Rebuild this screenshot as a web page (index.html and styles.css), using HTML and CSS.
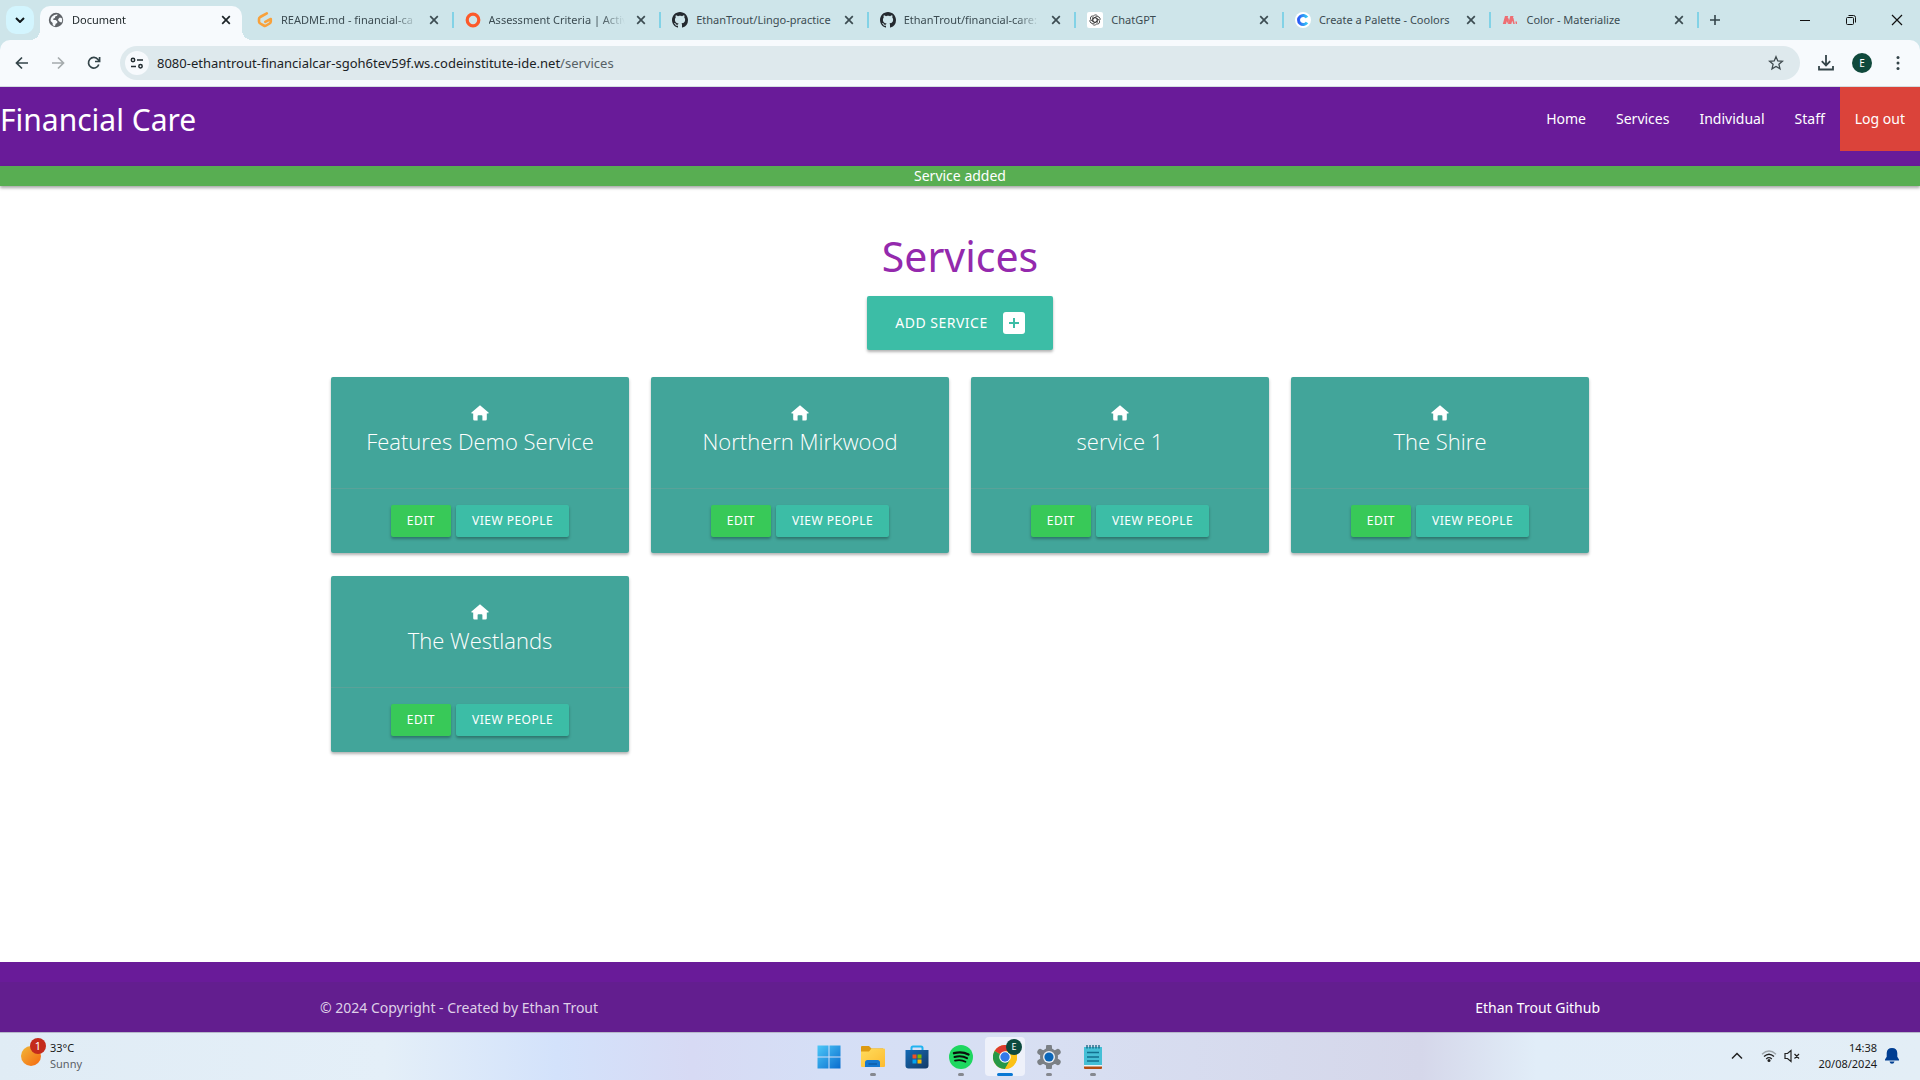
FILE: index.html
```html
<!DOCTYPE html>
<html lang="en">
<head>
<meta charset="utf-8">
<meta name="viewport" content="width=device-width, initial-scale=1">
<title>Document</title>
<link rel="stylesheet" href="styles.css">
</head>
<body>
<svg class="sprite" aria-hidden="true">
  <symbol id="close" viewBox="0 0 10 10"><path d="M1.2 1.2l7.6 7.6M8.8 1.2L1.2 8.8" fill="none" stroke="currentColor" stroke-width="1.7"/></symbol>
  <symbol id="github" viewBox="0 0 16 16"><path fill="#24292f" d="M8 0C3.58 0 0 3.58 0 8c0 3.54 2.29 6.53 5.47 7.59.4.07.55-.17.55-.38 0-.19-.01-.82-.01-1.49-2.01.37-2.53-.49-2.69-.94-.09-.23-.48-.94-.82-1.13-.28-.15-.68-.52-.01-.53.63-.01 1.08.58 1.23.82.72 1.21 1.87.87 2.33.66.07-.52.28-.87.51-1.07-1.78-.2-3.64-.89-3.64-3.95 0-.87.31-1.59.82-2.15-.08-.2-.36-1.02.08-2.12 0 0 .67-.21 2.2.82.64-.18 1.32-.27 2-.27s1.36.09 2 .27c1.53-1.04 2.2-.82 2.2-.82.44 1.1.16 1.92.08 2.12.51.56.82 1.27.82 2.15 0 3.07-1.87 3.75-3.65 3.95.29.25.54.73.54 1.48 0 1.07-.01 1.93-.01 2.2 0 .21.15.46.55.38A8.01 8.01 0 0 0 16 8c0-4.42-3.58-8-8-8z"/></symbol>
  <symbol id="house" viewBox="0 0 18 16"><path fill="currentColor" d="M9 0.2L0.5 7.4q-.7.9.4 1.2H2.2v5.6q0 1.4 1.3 1.4H6.6V11q0-.8.8-.8h3.2q.8 0 .8.8v4.6h3.1q1.3 0 1.3-1.4V8.600h1.3q1.100-.3.4-1.200z"/></symbol>
</svg>

<header class="browser">
  <div class="tab-strip">
    <button class="tab-search" aria-label="Search tabs"><svg width="10" height="6" viewBox="0 0 10 6"><path d="M1 1l4 4 4-4" fill="none" stroke="#10181b" stroke-width="2"/></svg></button>
    <div class="tab tab-active">
      <svg width="16" height="16" viewBox="0 0 16 16"><circle cx="8" cy="8" r="7.200" fill="#5f6368"/><path d="M9.500 2.200l-.4 1.600-1.900.8-.3 1.500-1.700.6.2 1.200 2.400.2 1.600 1.300-.2 1.600-1.500.8-.7 2.100q-1 .1-2.200-.6l-.2-2.400-2-1.800q-.3-2.500 1.200-4.300 2-2.400 5.700-2.600zM12 5.600l2.100 1q.4 2-.6 4l-1.700-.7-1.900-1.900 1-1.800z" fill="#f7fafd"/></svg>
      <span class="tab-title">Document</span>
      <button class="tab-close" aria-label="Close tab"><svg width="10" height="10"><use href="#close"/></svg></button>
    </div>
    <div class="tab-list">
      <div class="tab">
        <svg width="16" height="16" viewBox="0 0 16 16"><path d="M9.800 1.400L3.200 5q-1.200.7-1.200 2v2.500q0 1.300 1.200 2l3.600 2q1.200.7 2.400 0l3.400-2q1.200-.7 1.200-2V7L8.300 9.800" fill="none" stroke="#f9a13a" stroke-width="2.600" stroke-linecap="round" stroke-linejoin="round"/></svg>
        <span class="tab-title">README.md - financial-ca</span>
        <button class="tab-close" aria-label="Close tab"><svg width="10" height="10"><use href="#close"/></svg></button>
      </div>
      <div class="tab">
        <svg width="16" height="16" viewBox="0 0 16 16"><circle cx="8" cy="8" r="5.800" fill="none" stroke="#fc5a2a" stroke-width="3.200"/></svg>
        <span class="tab-title">Assessment Criteria | Activ</span>
        <button class="tab-close" aria-label="Close tab"><svg width="10" height="10"><use href="#close"/></svg></button>
      </div>
      <div class="tab">
        <svg width="16" height="16"><use href="#github"/></svg>
        <span class="tab-title tab-title-whole">EthanTrout/Lingo-practice</span>
        <button class="tab-close" aria-label="Close tab"><svg width="10" height="10"><use href="#close"/></svg></button>
      </div>
      <div class="tab">
        <svg width="16" height="16"><use href="#github"/></svg>
        <span class="tab-title">EthanTrout/financial-care:</span>
        <button class="tab-close" aria-label="Close tab"><svg width="10" height="10"><use href="#close"/></svg></button>
      </div>
      <div class="tab">
        <svg width="16" height="16" viewBox="0 0 16 16"><rect width="16" height="16" rx="2" fill="#fff"/><g fill="none" stroke="#333" stroke-width=".8"><path id="petal" d="M8 5.600L10.300 6.900V9.900Q10.300 12 8.600 13Q6.800 13.600 5.500 12.300"/><use href="#petal" transform="rotate(60 8 8)"/><use href="#petal" transform="rotate(120 8 8)"/><use href="#petal" transform="rotate(180 8 8)"/><use href="#petal" transform="rotate(240 8 8)"/><use href="#petal" transform="rotate(300 8 8)"/></g></svg>
        <span class="tab-title tab-title-whole">ChatGPT</span>
        <button class="tab-close" aria-label="Close tab"><svg width="10" height="10"><use href="#close"/></svg></button>
      </div>
      <div class="tab">
        <svg width="16" height="16" viewBox="0 0 16 16"><defs><linearGradient id="cool"><stop offset="0" stop-color="#2b5cf6"/><stop offset="1" stop-color="#35c8f5"/></linearGradient></defs><circle cx="8" cy="8" r="8" fill="#fff"/><path d="M12 5.500A4.600 4.600 0 1 0 12 10.500" fill="none" stroke="url(#cool)" stroke-width="3"/></svg>
        <span class="tab-title tab-title-whole">Create a Palette - Coolors</span>
        <button class="tab-close" aria-label="Close tab"><svg width="10" height="10"><use href="#close"/></svg></button>
      </div>
      <div class="tab">
        <svg width="16" height="16" viewBox="0 0 16 16"><path d="M3 4h3.200L4 12H.8zM8.300 4h3.200L9.300 12H6.100zM5.500 4l1.500 4-1 4-1.300-3zM11 4l1.800 8h-1.500L10 8zM13.300 9.500h1.700V12h-1.200z" fill="#ee6e73"/></svg>
        <span class="tab-title tab-title-whole">Color - Materialize</span>
        <button class="tab-close" aria-label="Close tab"><svg width="10" height="10"><use href="#close"/></svg></button>
      </div>
    </div>
    <div class="window-tools">
      <button class="new-tab" aria-label="New tab"><svg width="12" height="12" viewBox="0 0 12 12"><path d="M6 1v10M1 6h10" stroke="#35454b" stroke-width="1.600"/></svg></button>
      <div class="window-buttons">
        <button aria-label="Minimize"><svg width="12" height="12" viewBox="0 0 12 12"><path d="M1 6.500h10" stroke="#111"/></svg></button>
        <button aria-label="Restore"><svg width="12" height="12" viewBox="0 0 12 12"><g fill="none" stroke="#111"><rect x="1.500" y="3.500" width="7" height="7" rx="1"/><path d="M3.500 1.500h5q2 0 2 2v5"/></g></svg></button>
        <button aria-label="Close"><svg width="12" height="12" viewBox="0 0 12 12"><path d="M1 1l10 10M11 1L1 11" stroke="#111" stroke-width="1.200"/></svg></button>
      </div>
    </div>
  </div>
  <div class="toolbar">
    <button aria-label="Back"><svg width="14" height="14" viewBox="0 0 14 14"><path d="M13 7H2M7 1.500L1.500 7 7 12.500" fill="none" stroke="#344449" stroke-width="1.700"/></svg></button>
    <button aria-label="Forward"><svg width="14" height="14" viewBox="0 0 14 14"><path d="M1 7h11M7 1.500L12.500 7 7 12.500" fill="none" stroke="#a5abad" stroke-width="1.700"/></svg></button>
    <button aria-label="Reload"><svg width="14" height="14" viewBox="0 0 14 14"><path d="M11.800 8.500A5.300 5.300 0 1 1 11 3.500l1.500 1.700M12.600 1v4.500H8" fill="none" stroke="#344449" stroke-width="1.700"/></svg></button>
    <div class="omnibox">
      <button class="site-info" aria-label="Site information"><svg width="14" height="12" viewBox="0 0 14 12"><g fill="none" stroke="#222c30" stroke-width="1.500"><circle cx="3" cy="3" r="1.700"/><path d="M7 3h6M1 9.500h5"/><circle cx="10.500" cy="9.300" r="1.700"/></g></svg></button>
      <a class="url" href="#">8080-ethantrout-financialcar-sgoh6tev59f.ws.codeinstitute-ide.net<span>/services</span></a>
      <button class="bookmark" aria-label="Bookmark this tab"><svg width="16" height="16" viewBox="0 0 16 16"><path d="M8 1.700l1.800 4.200 4.600.4-3.500 3 1.100 4.500L8 11.400l-4 2.400 1.100-4.500-3.500-3 4.600-.4z" fill="none" stroke="#3f4a4e" stroke-width="1.300"/></svg></button>
    </div>
    <div class="toolbar-end">
      <button aria-label="Downloads"><svg width="18" height="18" viewBox="0 0 18 18"><path d="M9 1v10M4.800 7.200L9 11.400l4.200-4.200M2 12v3.500h14V12" fill="none" stroke="#344449" stroke-width="1.800"/></svg></button>
      <button class="avatar" aria-label="Profile">E</button>
      <button class="menu" aria-label="Menu"><svg width="4" height="16" viewBox="0 0 4 16"><g fill="#344449"><circle cx="2" cy="2.500" r="1.500"/><circle cx="2" cy="8" r="1.500"/><circle cx="2" cy="13.500" r="1.500"/></g></svg></button>
    </div>
  </div>
</header>

<nav class="site-nav">
  <a class="brand" href="#">Financial Care</a>
  <ul class="nav-links">
    <li><a href="#">Home</a></li>
    <li><a href="#">Services</a></li>
    <li><a href="#">Individual</a></li>
    <li><a href="#">Staff</a></li>
    <li><a class="logout" href="#">Log out</a></li>
  </ul>
</nav>
<p class="flash" role="status">Service added</p>

<main class="page">
  <h1>Services</h1>
  <button class="btn btn-large">ADD SERVICE
    <svg width="22" height="22" viewBox="0 0 22 22"><rect width="22" height="22" rx="3" fill="#fff"/><path d="M11 6v10M6 11h10" stroke="#3cbda6" stroke-width="2"/></svg>
  </button>
  <div class="cards">
    <article class="card">
      <div class="card-content"><svg width="18" height="16"><use href="#house"/></svg><h2>Features Demo Service</h2></div>
      <div class="card-action"><button class="btn btn-edit">EDIT</button><button class="btn">VIEW PEOPLE</button></div>
    </article>
    <article class="card">
      <div class="card-content"><svg width="18" height="16"><use href="#house"/></svg><h2>Northern Mirkwood</h2></div>
      <div class="card-action"><button class="btn btn-edit">EDIT</button><button class="btn">VIEW PEOPLE</button></div>
    </article>
    <article class="card">
      <div class="card-content"><svg width="18" height="16"><use href="#house"/></svg><h2>service 1</h2></div>
      <div class="card-action"><button class="btn btn-edit">EDIT</button><button class="btn">VIEW PEOPLE</button></div>
    </article>
    <article class="card">
      <div class="card-content"><svg width="18" height="16"><use href="#house"/></svg><h2>The Shire</h2></div>
      <div class="card-action"><button class="btn btn-edit">EDIT</button><button class="btn">VIEW PEOPLE</button></div>
    </article>
    <article class="card">
      <div class="card-content"><svg width="18" height="16"><use href="#house"/></svg><h2>The Westlands</h2></div>
      <div class="card-action"><button class="btn btn-edit">EDIT</button><button class="btn">VIEW PEOPLE</button></div>
    </article>
  </div>
</main>

<footer class="site-footer">
  <div class="copyright">
    <div class="container"><span>© 2024 Copyright - Created by Ethan Trout</span><a href="#">Ethan Trout Github</a></div>
  </div>
</footer>

<div class="taskbar">
  <button class="weather">
    <svg width="26" height="30" viewBox="0 0 26 30"><defs><linearGradient id="sun" x1="0" y1="0" x2="1" y2="1"><stop offset="0" stop-color="#f0b93a"/><stop offset="1" stop-color="#f6670f"/></linearGradient></defs><circle cx="11" cy="18" r="10" fill="url(#sun)"/><circle cx="18" cy="8" r="8" fill="#c42b1c"/><text x="18" y="12" class="weather-count">1</text></svg>
    <span class="weather-text"><span>33°C</span><span class="muted">Sunny</span></span>
  </button>
  <div class="apps">
    <button class="app" aria-label="Start"><svg width="24" height="24" viewBox="0 0 24 24"><defs><linearGradient id="win" x1="0" y1="0" x2="1" y2="1"><stop offset="0" stop-color="#4cc8f8"/><stop offset="1" stop-color="#0a6cce"/></linearGradient></defs><path d="M.5.500h11v11H.500zM12.500.500h11v11h-11zM.500 12.500h11v11H.500zM12.500 12.500h11v11h-11z" fill="url(#win)"/></svg></button>
    <button class="app app-open" aria-label="File Explorer"><svg width="24" height="24" viewBox="0 0 24 24"><defs><linearGradient id="fold" x1="0" y1="0" x2="1" y2="1"><stop offset="0" stop-color="#ffdc5c"/><stop offset="1" stop-color="#fdbb30"/></linearGradient></defs><path d="M0 2q0-1 1-1h7l2.500 2.500H22V8H0z" fill="#dd9a12"/><path d="M0 6.500h8l2.500-3H23q1 0 1 1V21q0 1-1 1H1q-1 0-1-1z" fill="url(#fold)"/><path d="M4 22v-4.500q0-2.500 2.500-2.500h10q2.500 0 2.500 2.500V22z" fill="#1477cf"/><path d="M7.500 19h8.500" stroke="#0c5ba6" stroke-width="1.500"/></svg></button>
    <button class="app" aria-label="Microsoft Store"><svg width="24" height="24" viewBox="0 0 24 24"><defs><linearGradient id="shop" x1="0" y1="0" x2="1" y2="1"><stop offset="0" stop-color="#136ab5"/><stop offset="1" stop-color="#143a66"/></linearGradient></defs><path d="M6.500 6V3q0-1.500 1.500-1.500h8q1.500 0 1.500 1.500v3" fill="none" stroke="#20b3f0" stroke-width="2"/><path d="M.5 5h23v15.500q0 3-3 3h-17q-3 0-3-3z" fill="url(#shop)"/><path fill="#f25022" d="M7.500 9.500h4v4h-4z"/><path fill="#7fba00" d="M12.500 9.500h4v4h-4z"/><path fill="#00a4ef" d="M7.500 14.500h4v4h-4z"/><path fill="#ffb900" d="M12.500 14.500h4v4h-4z"/></svg></button>
    <button class="app app-open" aria-label="Spotify"><svg width="24" height="24" viewBox="0 0 24 24"><circle cx="12" cy="12" r="12" fill="#1ed760"/><g fill="none" stroke="#0b0f0c" stroke-linecap="round"><path d="M5 8.200q8-2.200 14.500 1.300" stroke-width="2.400"/><path d="M5.500 12q7-2 12.500 1.200" stroke-width="2"/><path d="M6 15.600q6-1.500 10.500 1.200" stroke-width="1.700"/></g></svg></button>
    <button class="app app-open app-current" aria-label="Chrome"><svg width="24" height="24" viewBox="0 0 24 24"><circle cx="12" cy="12" r="12" fill="#fbc116"/><path d="M12 12L1.600 6A12 12 0 0 1 22.400 6z" fill="#dd3b2f"/><path d="M12 12L1.600 6A12 12 0 0 0 12 24l5-9z" fill="#279847"/><path d="M22.400 6H12l5.200 9L12 24A12 12 0 0 0 22.400 6z" fill="#fbc116"/><circle cx="12" cy="12" r="5.800" fill="#fff"/><circle cx="12" cy="12" r="4.700" fill="#3379e8"/></svg><span class="app-badge">E</span></button>
    <button class="app app-open" aria-label="Settings"><svg width="24" height="24" viewBox="0 0 24 24"><path d="M12 2v20M3.300 7l17.400 10M3.300 17L20.700 7" stroke="#7b8085" stroke-width="6" stroke-linecap="round"/><circle cx="12" cy="12" r="9" fill="#7b8085"/><circle cx="12" cy="12" r="6" fill="#e9eef5"/><circle cx="12" cy="12" r="4.600" fill="#0b66b8"/></svg></button>
    <button class="app app-open" aria-label="Notepad"><svg width="24" height="24" viewBox="0 0 24 24"><path d="M3 21h18v2q0 1-1 1H4q-1 0-1-1z" fill="#b34c10"/><path d="M3 2h18v19H3z" fill="#45bfd6"/><path d="M3 20h18v1.500H3z" fill="#e9f3f6"/><path d="M6 0v3.500M9 0v3.500M12 0v3.500M15 0v3.500M18 0v3.500" stroke="#155f7c" stroke-width="1.300"/><path d="M6 7.500h12M6 12h12M6 16h12" stroke="#12708f" stroke-width="1.500"/></svg></button>
  </div>
  <div class="tray">
    <button aria-label="Show hidden icons"><svg width="12" height="8" viewBox="0 0 12 8"><path d="M1 6.500l5-5 5 5" fill="none" stroke="#222" stroke-width="1.500"/></svg></button>
    <button class="quick" aria-label="Network and volume">
      <svg width="16" height="14" viewBox="0 0 16 14"><g fill="none" stroke-width="1.300"><path d="M1 5.300q7-6.500 14 0" stroke="#9da5aa"/><path d="M3 7.600q5-4.600 10 0M5.200 9.900q2.800-2.500 5.600 0" stroke="#222"/></g><circle cx="8" cy="11.500" r="1.500" fill="#222"/></svg>
      <svg width="16" height="14" viewBox="0 0 16 14"><path d="M1 4.500h2.500L7 1.500v11L3.500 9.500H1zM10.500 5l4.500 4.500M15 5l-4.500 4.500" fill="none" stroke="#222" stroke-width="1.200"/></svg>
    </button>
    <button class="clock"><span>14:38</span><span>20/08/2024</span></button>
    <button aria-label="Notifications"><svg width="14" height="16" viewBox="0 0 14 16"><path d="M7 0q5 0 5.300 5v3.800L14 11.500v1H0v-1l1.700-2.700V5Q2 0 7 0zM4.500 13.500h5Q9 15.700 7 15.700t-2.500-2.200z" fill="#003e92"/></svg></button>
  </div>
</div>
</body>
</html>
```
FILE: styles.css
```css
* { box-sizing: border-box; }
body {
  margin: 0;
  min-height: 100vh;
  display: flex;
  flex-direction: column;
  background: #fff;
  font: 14px/20px "Noto Sans", "Open Sans", sans-serif;
}
button {
  padding: 0;
  border: 0;
  background: none;
  font: inherit;
  color: inherit;
}
a { color: inherit; text-decoration: none; }
svg { display: block; flex: none; }
.sprite { position: absolute; width: 0; height: 0; }

/* Browser frame */
.browser { background: #cee5ea; }
.tab-strip {
  display: flex;
  height: 40px;
  padding-left: 6px;
}
.tab-search {
  display: grid;
  place-items: center;
  width: 28px;
  height: 28px;
  margin: 6px 6px 0 0;
  border-radius: 10px;
  background: #d3f5fe;
}
.tab {
  display: flex;
  align-items: center;
  gap: 8px;
  height: 28px;
  margin-top: 6px;
  padding: 0 12px 0 11px;
  font-size: 11px;
  color: #3c4c52;
}
.tab-active {
  position: relative;
  flex: 0 1 202px;
  height: 34px;
  padding: 0 8px 6px 8px;
  border-radius: 10px 10px 0 0;
  background: #f7fafd;
  color: #1c2427;
}
.tab-active::before,
.tab-active::after {
  content: "";
  position: absolute;
  bottom: 0;
  width: 10px;
  height: 10px;
}
.tab-active::before { right: 100%; background: radial-gradient(circle at 0 0, transparent 10px, #f7fafd 10px); }
.tab-active::after { left: 100%; background: radial-gradient(circle at 100% 0, transparent 10px, #f7fafd 10px); }
.tab-title {
  flex: 1;
  min-width: 0;
  overflow: hidden;
  white-space: nowrap;
  mask-image: linear-gradient(to right, #000 calc(100% - 24px), transparent);
}
.tab-title-whole { mask-image: none; }
.tab-close { display: grid; place-items: center; width: 16px; height: 16px; }
.tab-list { display: flex; flex: 1; min-width: 0; margin-left: 4px; }
.tab-list .tab { flex: 1; min-width: 0; position: relative; }
.tab-list .tab::after {
  content: "";
  position: absolute;
  right: 0;
  top: 6px;
  width: 2px;
  height: 16px;
  background: #82d2e6;
}
.window-tools { display: flex; justify-content: space-between; width: 221px; height: 40px; }
.new-tab { display: grid; place-items: center; width: 32px; }
.window-buttons { display: flex; }
.window-buttons button { display: grid; place-items: center; width: 46px; }

.toolbar {
  display: flex;
  align-items: center;
  height: 47px;
  padding: 0 10px 1px 4px;
  border-bottom: 1px solid #d3dde0;
  border-radius: 10px 10px 0 0;
  background: #f7fafd;
}
.toolbar > button { display: grid; place-items: center; width: 36px; height: 34px; }
.omnibox {
  display: flex;
  align-items: center;
  flex: 1;
  min-width: 0;
  height: 34px;
  margin-left: 8px;
  padding: 0 16px 0 5px;
  border-radius: 17px;
  background: #dee9ed;
}
.site-info {
  display: grid;
  place-items: center;
  width: 24px;
  height: 24px;
  margin-right: 8px;
  border-radius: 50%;
  background: #f7fafd;
}
.url { flex: 1; font-size: 13px; color: #1b2225; white-space: nowrap; overflow: hidden; }
.url span { color: #566165; }
.toolbar-end { display: flex; align-items: center; gap: 17px; padding: 0 10px 0 17px; }
.menu { margin-left: 7px; }
.avatar {
  width: 20px;
  height: 20px;
  border-radius: 50%;
  background: #10493c;
  color: #fff;
  font-size: 10px;
}

/* Site header */
.site-nav {
  display: flex;
  justify-content: space-between;
  height: 79px;
  background: #691b99;
  color: #fff;
}
.brand { font-size: 30px; line-height: 66px; }
.nav-links { display: flex; margin: 0; padding: 0; list-style: none; }
.nav-links a { display: block; padding: 0 15px; line-height: 64px; }
.logout { background: #db433a; }
.flash {
  margin: 0;
  background: #58ae52;
  color: #fff;
  text-align: center;
  box-shadow: 0 2px 3px rgba(0, 0, 0, .35);
}

/* Services page */
.page { flex: 1; display: flex; flex-direction: column; align-items: center; padding-top: 42px; }
h1 { margin: 0 0 12px; font-size: 41px; line-height: 56px; font-weight: 400; color: #9429ad; }
.btn {
  height: 32px;
  padding: 0 16px;
  border-radius: 2px;
  background: #3cbda6;
  color: #fff;
  font-size: 12px;
  letter-spacing: .5px;
  box-shadow: 0 2px 3px rgba(0, 0, 0, .3);
}
.btn-edit { background: #38c958; }
.btn-large { display: flex; align-items: center; gap: 15px; height: 54px; padding: 0 28px; font-size: 14px; }
.cards {
  display: grid;
  grid-template-columns: repeat(4, 1fr);
  gap: 23px 22px;
  width: 100%;
  max-width: 1280px;
  padding: 27px 11px;
}
.card {
  border-radius: 2px;
  background: #42a59a;
  color: #fff;
  box-shadow: 0 2px 3px rgba(0, 0, 0, .3);
}
.card-content { display: flex; flex-direction: column; align-items: center; gap: 4px; padding: 28px 22px 31px; }
h2 { margin: 0; font: 300 22px/32px "Open Sans", "Noto Sans", sans-serif; }
.card-action { display: flex; justify-content: center; gap: 5px; padding: 16px; border-top: 1px solid #5aa299; }

/* Site footer */
.site-footer { padding-top: 20px; background: #691b99; }
.copyright { height: 50px; padding-top: 16px; background: #631e8f; color: #dfd0e8; }
.container { display: flex; justify-content: space-between; max-width: 1280px; margin: 0 auto; }
.copyright a { color: #fff; }

/* Taskbar */
.taskbar {
  display: grid;
  grid-template-columns: 1fr auto 1fr;
  height: 48px;
  border-top: 1px solid #b5b9c9;
  background: linear-gradient(to right, #e0ecf5, #e4eff8 20%, #d3e2fb 29%, #d7daf4 36%, #d5dff6 43%, #d8dff2 55%, #d5d7ea 74%, #e1edf8 80%, #e3eef6);
  color: #1a1a1a;
  font-size: 11px;
  line-height: 16px;
}
.weather { display: flex; align-items: center; gap: 4px; padding: 0 0 2px 20px; justify-self: start; }
.weather svg { align-self: flex-start; margin-top: 5px; }
.weather-count { font-size: 11px; fill: #fff; text-anchor: middle; }
.weather-text { display: flex; flex-direction: column; text-align: left; }
.muted { color: #5b6166; }
.apps { display: flex; gap: 4px; padding: 4px 0 0 2px; }
.app { position: relative; display: grid; place-items: center; width: 40px; height: 39px; border-radius: 4px; }
.app-open::after {
  content: "";
  position: absolute;
  bottom: 0;
  left: 50%;
  width: 6px;
  height: 3px;
  margin-left: -3px;
  border-radius: 2px;
  background: #85888f;
}
.app-current { background: #eef1fa; }
.app-current::after { width: 16px; margin-left: -8px; background: #0a78d4; }
.app-badge {
  position: absolute;
  top: 2px;
  right: 3px;
  width: 16px;
  height: 16px;
  border-radius: 50%;
  background: #0d4a3e;
  color: #fff;
  font-size: 9px;
}
.tray { display: flex; align-items: center; justify-content: flex-end; gap: 18px; padding: 0 21px 2px 0; }
.quick { display: flex; gap: 7px; }
.clock { display: flex; flex-direction: column; text-align: right; }
.clock + button { margin-left: -10px; }
```
